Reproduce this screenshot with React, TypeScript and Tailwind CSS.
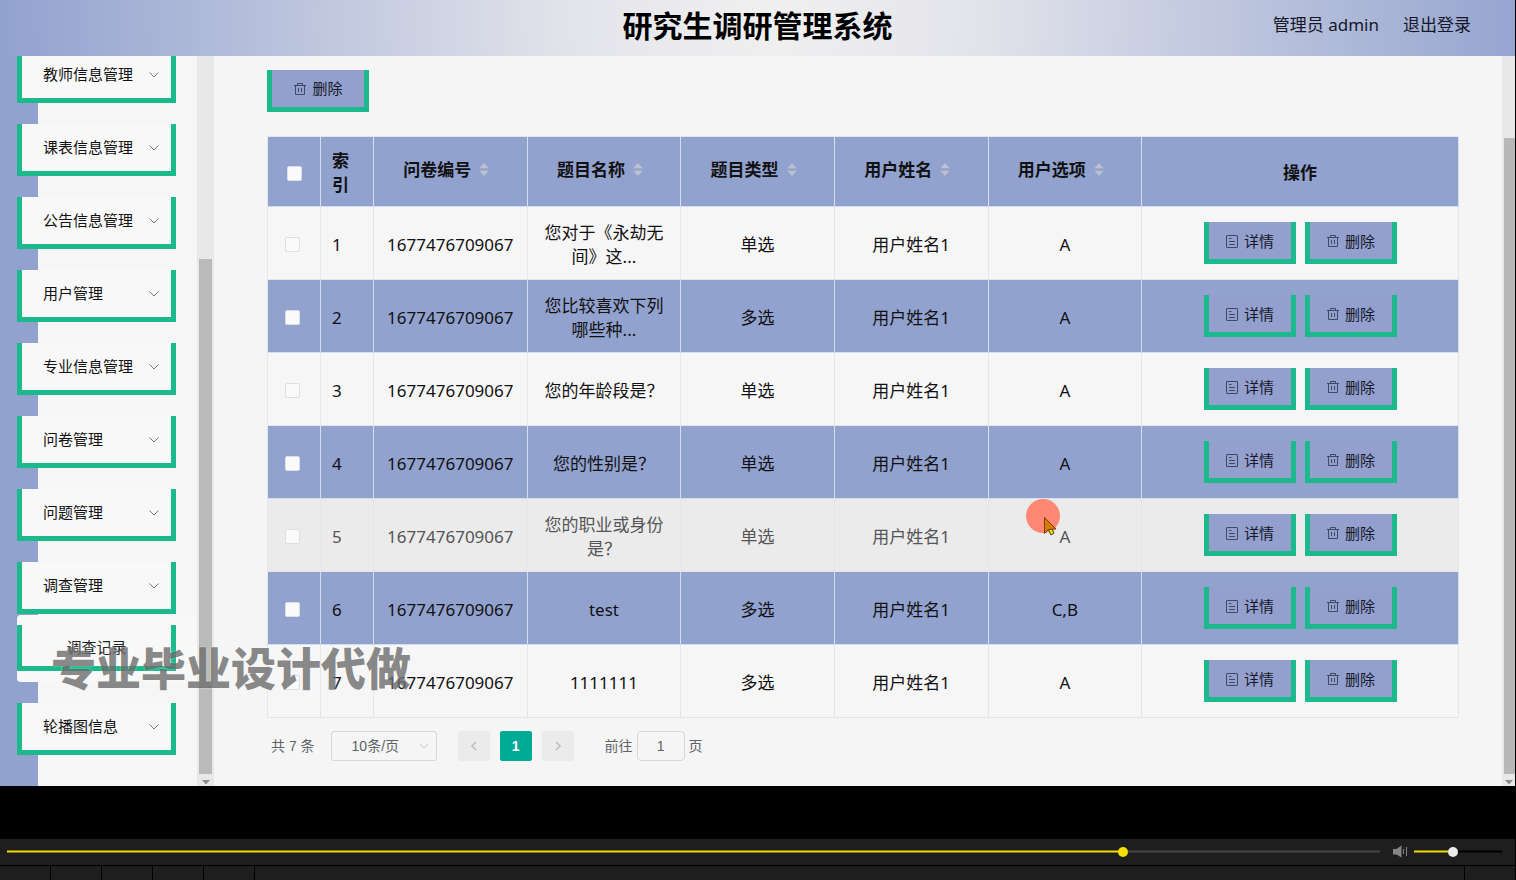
import { useState } from "react";

interface Answer {
    id: number;
    title: string;
    type: string;
    option: string;
}

const menuItems = [
    "教师信息管理",
    "课表信息管理",
    "公告信息管理",
    "用户管理",
    "专业信息管理",
    "问卷管理",
    "问题管理",
    "调查管理",
    "轮播图信息",
];

const sortable = ["问卷编号", "题目名称", "题目类型", "用户姓名", "用户选项"];

const answers: Answer[] = [
    { id: 1, title: "您对于《永劫无间》这...", type: "单选", option: "A" },
    { id: 2, title: "您比较喜欢下列哪些种...", type: "多选", option: "A" },
    { id: 3, title: "您的年龄段是？", type: "单选", option: "A" },
    { id: 4, title: "您的性别是？", type: "单选", option: "A" },
    { id: 5, title: "您的职业或身份是？", type: "单选", option: "A" },
    { id: 6, title: "test", type: "多选", option: "C,B" },
    { id: 7, title: "1111111", type: "多选", option: "A" },
];

const cell = "border-r border-b px-[11px]";
const textCell = "border-r border-b px-[11px] pt-[3px]";
const checkbox =
    "block size-[15px] appearance-none rounded-[2px] border border-[#dcdfe6] bg-[#fafafa] checked:bg-[#00ab95]";

function TrashIcon() {
    return (
        <svg width="14" height="14" viewBox="0 0 14 14" fill="none" stroke="#3f4865" aria-hidden="true">
            <path d="M1 3.5h12M4.5 3.5v-2h5v2M2.5 3.5v9h9v-9M5.5 6v4M8.5 6v4" />
        </svg>
    );
}

function DetailIcon() {
    return (
        <svg width="14" height="14" viewBox="0 0 14 14" fill="none" stroke="#3f4865" aria-hidden="true">
            <rect x="1.5" y="1.5" width="11" height="12" rx="0.5" />
            <path d="M4 4.5h2.500M4 7.500h6M4 10.500h6" />
        </svg>
    );
}

function ChevronDown({ color }: { color: string }) {
    return (
        <svg width="10" height="6" viewBox="0 0 10 6" fill="none" stroke={color} aria-hidden="true">
            <path d="M0.500 0.500l4.500 4.500l4.500-4.500" />
        </svg>
    );
}

function SortIcon() {
    return (
        <svg width="10" height="13" viewBox="0 0 10 13" fill="#bcc1cd" aria-hidden="true">
            <path d="M5 0l4.700 5.300H0.300zM5 13l4.700-5.300H0.300z" />
        </svg>
    );
}

function ActionButton({ kind, wide }: { kind: "detail" | "delete"; wide?: boolean }) {
    return (
        <button
            type="button"
            className={`flex h-[42px] items-center justify-center gap-[5px] border-x-[5px] border-b-[5px] border-[#1bb98c] bg-[#939fcc] text-[15px] text-[#15182a] ${wide ? "w-[102px]" : "w-[92px]"}`}
        >
            {kind === "detail" ? <DetailIcon /> : <TrashIcon />}
            {kind === "detail" ? "详情" : "删除"}
        </button>
    );
}

function ScrollArrow() {
    return (
        <svg className="mx-auto" width="8" height="12" viewBox="0 0 8 12" fill="#8b8b8b" aria-hidden="true">
            <path d="M0 6h8l-4 4.500z" />
        </svg>
    );
}

function Sidebar() {
    return (
        <aside className="flex w-[214px] shrink-0">
            <div className="flex-1 overflow-hidden bg-[#92a2cf] pl-[38px]">
                <nav className="-mt-[5px] box-content h-full bg-[#f6f6f7] pb-[5px]">
                    {menuItems.map((item) => (
                        <div key={item} className="mb-[21px] -ml-[21px]">
                            <button
                                type="button"
                                className="flex h-[52px] w-[159px] items-center justify-between border-x-[5px] border-b-[5px] border-[#1bb98c] bg-[#f8f8f8] pr-3 pl-[21px] text-[15px] text-[#111]"
                            >
                                {item}
                                <ChevronDown color="#777" />
                            </button>
                            {item === "调查管理" && (
                                <div className="mt-px rounded-l bg-[#f8f8f8] pt-[10px] pb-[11px]">
                                    <a
                                        href="#records"
                                        className="flex h-[46px] w-[159px] items-center justify-center border-x-[5px] border-b-[5px] border-[#1bb98c] pt-1 text-[15px] text-[#222]"
                                    >
                                        调查记录
                                    </a>
                                </div>
                            )}
                        </div>
                    ))}
                </nav>
            </div>
            <div className="flex w-[17px] flex-col bg-[#e9e8e8]">
                <div className="h-[203px]" />
                <div className="mx-[2px] flex-1 bg-[#bababa]" />
                <ScrollArrow />
            </div>
        </aside>
    );
}

function AnswerTable() {
    return (
        <table className="mt-[24px] w-full table-fixed border-separate border-spacing-0 border-t border-l border-[#e3e6ec] text-[17px] leading-[24px] text-[#111]">
            <colgroup>
                <col className="w-[53px]" />
                <col className="w-[53px]" />
                <col className="w-[12.9%]" />
                <col className="w-[12.9%]" />
                <col className="w-[12.9%]" />
                <col className="w-[12.9%]" />
                <col className="w-[12.9%]" />
                <col />
            </colgroup>
            <thead>
                <tr className="h-[70px] bg-[#92a2cf]">
                    <th className={`${textCell} border-[#d3def2]`}>
                        <input type="checkbox" aria-label="全选" className={`${checkbox} mx-auto`} />
                    </th>
                    <th className={`${textCell} border-[#d3def2] text-left`}>索引</th>
                    {sortable.map((name) => (
                        <th key={name} className="border-r border-b border-[#d3def2] pr-[19px] pb-1 pl-[11px]">
                            <button type="button" className="mx-auto flex items-center gap-2">
                                {name}
                                <SortIcon />
                            </button>
                        </th>
                    ))}
                    <th className={`${textCell} border-[#d3def2]`}>操作</th>
                </tr>
            </thead>
            <tbody className="text-center">
                {answers.map((row) => {
                    const striped = row.id % 2 === 0;
                    const line = striped ? "border-[#d3def2]" : "border-[#e6e6ea]";
                    const tone = striped ? "bg-[#92a2cf]" : row.id === 5 ? "bg-[#ebebeb] text-[#555]" : "bg-[#f7f6f7]";
                    return (
                        <tr key={row.id} className={`h-[73px] ${tone}`}>
                            <td className={`${textCell} ${line}`}>
                                <input
                                    type="checkbox"
                                    aria-label={`选择第${row.id}行`}
                                    className={`${checkbox} ml-[6px]`}
                                />
                            </td>
                            <td className={`${textCell} ${line} text-left`}>{row.id}</td>
                            <td className={`${textCell} ${line}`}>1677476709067</td>
                            <td className={`${textCell} ${line}`}>{row.title}</td>
                            <td className={`${textCell} ${line}`}>{row.type}</td>
                            <td className={`${textCell} ${line}`}>用户姓名1</td>
                            <td className={`${textCell} ${line}`}>{row.option}</td>
                            <td className={`${cell} ${line}`}>
                                <div className="flex justify-center gap-[9px]">
                                    <ActionButton kind="detail" />
                                    <ActionButton kind="delete" />
                                </div>
                            </td>
                        </tr>
                    );
                })}
            </tbody>
        </table>
    );
}

function Pagination() {
    return (
        <div className="mt-[13px] flex items-center pl-1 font-['Liberation_Sans','Noto_Sans_CJK_SC',sans-serif] text-sm text-[#606266]">
            <span>共 7 条</span>
            <div className="relative ml-4">
                <select
                    aria-label="每页条数"
                    className="h-[30px] w-[106px] appearance-none rounded-[3px] border border-[#d5d7dc] pl-5"
                >
                    <option>10条/页</option>
                </select>
                <span className="pointer-events-none absolute top-3 right-2">
                    <ChevronDown color="#c0c4cc" />
                </span>
            </div>
            <div className="ml-[21px] flex gap-[10px]">
                <button type="button" aria-label="上一页" className="flex h-[30px] w-8 items-center justify-center rounded-[2px] bg-[#ebebeb]">
                    <svg width="8" height="10" viewBox="0 0 8 10" fill="none" stroke="#b9bbc0" strokeWidth="1.500">
                        <path d="M6 1L2 5l4 4" />
                    </svg>
                </button>
                <button type="button" className="h-[30px] w-8 rounded-[2px] bg-[#00ab95] font-bold text-white">
                    1
                </button>
                <button type="button" aria-label="下一页" className="flex h-[30px] w-8 items-center justify-center rounded-[2px] bg-[#ebebeb]">
                    <svg width="8" height="10" viewBox="0 0 8 10" fill="none" stroke="#b9bbc0" strokeWidth="1.500">
                        <path d="M2 1l4 4-4 4" />
                    </svg>
                </button>
            </div>
            <label className="ml-[31px] flex items-center gap-1">
                前往
                <input
                    type="text"
                    defaultValue="1"
                    className="h-[30px] w-12 rounded-[4px] border border-[#d5d7dc] text-center"
                />
                页
            </label>
        </div>
    );
}

interface SliderProps {
    label: string;
    value: number;
    onChange: (value: number) => void;
    rest: string;
    className: string;
}

function Slider({ label, value, onChange, rest, className }: SliderProps) {
    // darker edge above and below the bright centre line
    const edges = "linear-gradient(to bottom, #1e1e1e80 1px, transparent 1px 2px, #1e1e1e80 2px)";
    const fill = `linear-gradient(to right, #f5df00 ${value / 10}%, ${rest} ${value / 10}%)`;
    return (
        <input
            type="range"
            aria-label={label}
            min={0}
            max={1000}
            value={value}
            onChange={(e) => onChange(Number(e.target.value))}
            style={{ backgroundImage: `${edges}, ${fill}` }}
            className={`h-[3px] appearance-none [&::-webkit-slider-thumb]:size-[10px] [&::-webkit-slider-thumb]:appearance-none [&::-webkit-slider-thumb]:rounded-full ${className}`}
        />
    );
}

function PlayerControls() {
    const [progress, setProgress] = useState(815);
    const [volume, setVolume] = useState(436);

    return (
        <div className="mr-px bg-[#1e1e1e]">
            <div className="flex h-[26px] items-center pr-[13px] pb-px pl-[7px]">
                <Slider
                    label="播放进度"
                    value={progress}
                    onChange={setProgress}
                    rest="#444"
                    className="min-w-0 flex-1 [&::-webkit-slider-thumb]:bg-[#f5df00]"
                />
                <button type="button" aria-label="静音" className="mr-[6px] ml-3">
                    <svg width="16" height="13" viewBox="0 0 16 13" fill="#858585">
                        <path d="M1 4h3.500L9.500 0.500v12L4.500 9.500H1zM11 4h1v5h-1zM14 2h1v9h-1z" />
                    </svg>
                </button>
                <Slider
                    label="音量"
                    value={volume}
                    onChange={setVolume}
                    rest="#000"
                    className="w-[88px] [&::-webkit-slider-thumb]:bg-[#eaeaea]"
                />
            </div>
            <div className="flex h-[15px] border-t border-black">
                <div className="w-[51px] border-r border-black" />
                <div className="w-[51px] border-r border-black" />
                <div className="w-[51px] border-r border-black" />
                <div className="w-[51px] border-r border-black" />
                <div className="w-[51px] border-r border-black" />
                <div className="flex-1 border-r border-black" />
                <div className="w-[50px]" />
            </div>
        </div>
    );
}

export default function App() {
    return (
        <div className="flex min-h-screen flex-col bg-black font-['Noto_Sans','Noto_Sans_CJK_SC',sans-serif]">
            <div className="relative mr-px flex flex-1 flex-col overflow-hidden bg-[#f5f5f5]">
                <header className="grid h-14 grid-cols-[1fr_auto_1fr] items-center bg-[radial-gradient(ellipse_51%_1400%_at_51%_30%,#f0f0f0,#e4e5eb_25%,#92a2cf)] text-[17px] text-[#15182a]">
                    <h1 className="col-start-2 pb-1 text-[30px] leading-[44px] font-bold text-black">
                        研究生调研管理系统
                    </h1>
                    <div className="flex justify-end gap-6 pr-11 pb-[6px]">
                        <span>管理员 admin</span>
                        <a href="#logout">退出登录</a>
                    </div>
                </header>
                <div className="flex flex-1">
                    <Sidebar />
                    <main className="min-w-0 flex-1 pt-[14px] pr-[43px] pl-[53px]">
                        <ActionButton kind="delete" wide />
                        <AnswerTable />
                        <Pagination />
                    </main>
                    <div className="flex w-[13px] flex-col bg-[#e9e8e8]">
                        <div className="h-[82px]" />
                        <div className="ml-[2px] flex-1 bg-[#b8b8b8]" />
                        <ScrollArrow />
                    </div>
                </div>

                {/* watermark and pointer float over the page */}
                <p className="pointer-events-none absolute top-[639px] left-[51px] text-[45px] leading-[60px] font-black text-[#30303090] [text-shadow:0_0_2px_#ffffff90]">
                    专业毕业设计代做
                </p>
                <div className="pointer-events-none absolute top-[499px] left-[1026px]">
                    <svg width="36" height="40" viewBox="0 0 36 40" aria-hidden="true">
                        <circle cx="17" cy="17" r="17" fill="#ff8874" />
                        <path d="M22 30l3-2 3 6-3 2z" fill="#e8e000" stroke="#4b3c10" />
                        <path d="M18.500 18.500v16l4-4 7.500-.5z" fill="#d67a05" stroke="#7a3d08" />
                    </svg>
                </div>
            </div>
            <div className="h-[53px]" />
            <PlayerControls />
        </div>
    );
}
